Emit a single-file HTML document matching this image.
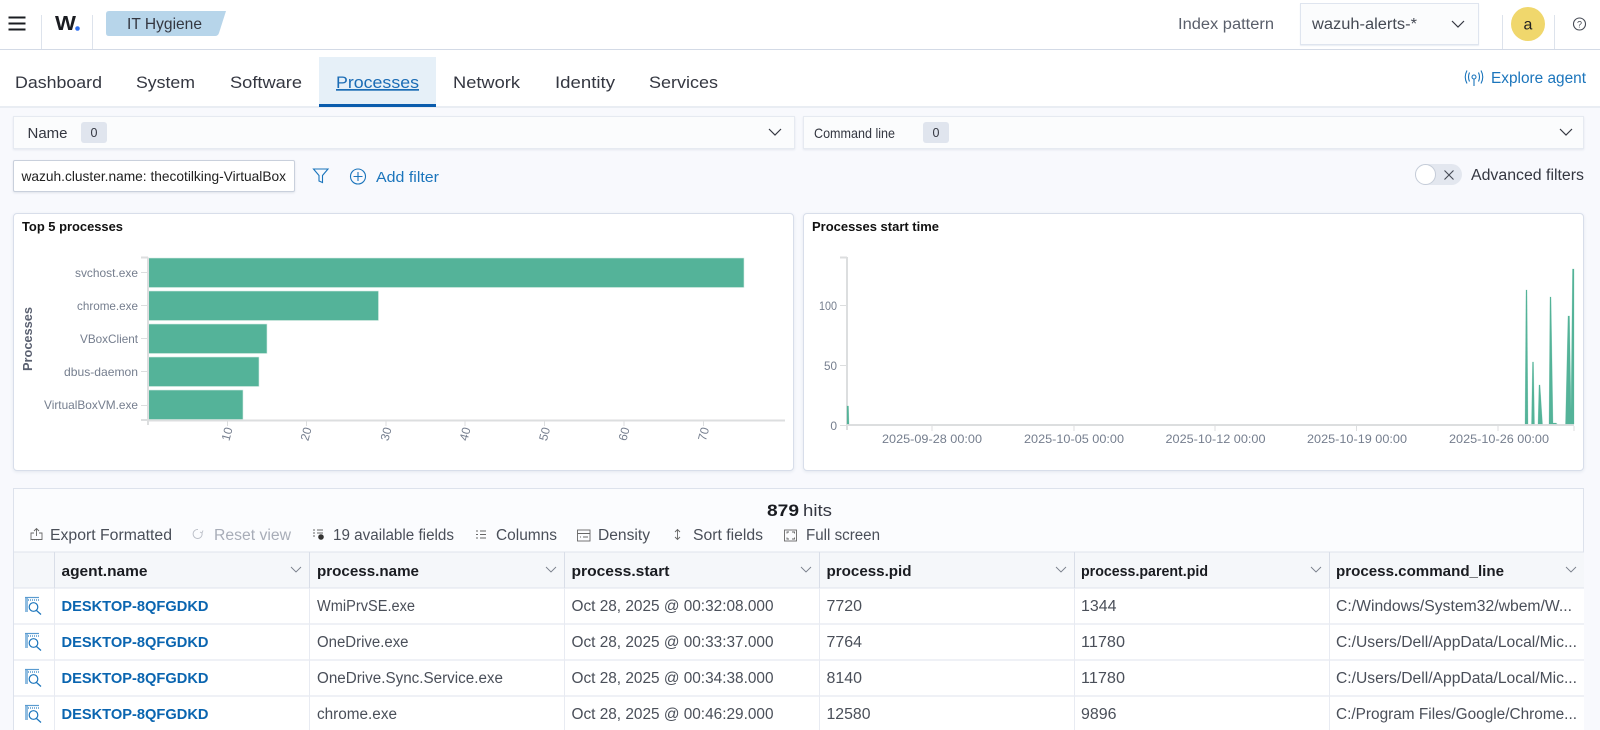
<!DOCTYPE html>
<html><head><meta charset="utf-8"><title>IT Hygiene</title>
<style>
html,body{margin:0;padding:0;width:1600px;height:730px;overflow:hidden;background:#f8f9fd;font-family:"Liberation Sans",sans-serif}
.b{position:absolute;box-sizing:border-box}
svg{position:absolute;left:0;top:0;filter:blur(.3px)}
text{font-family:"Liberation Sans",sans-serif;fill:#343741}
.t{font-size:17px;fill:#343741}
.h{font-size:15px;font-weight:bold;fill:#1a1c21}
.c{font-size:15.5px;fill:#4a4f59}
.l{font-size:15px;font-weight:bold;fill:#0a65b0}
.a{font-size:12px;fill:#757e8e}
.ti{font-size:12.5px;font-weight:bold;fill:#111}
</style></head><body>
<div class="b" style="left:0;top:0;width:1600px;height:50px;background:#fff;border-bottom:1px solid #d3dae6"></div>
<div class="b" style="left:0;top:50px;width:1600px;height:57px;background:#fff"></div>
<div class="b" style="left:0;top:106px;width:1600px;height:2px;background:#e9edf3"></div>
<div class="b" style="left:319px;top:57px;width:117px;height:50px;background:#e6f0f8;border-bottom:3px solid #0a5cad"></div>
<div class="b" style="left:1300px;top:3px;width:179px;height:42px;background:#fbfcfd;border:1px solid #dfe5ef;box-shadow:0 1px 1px #e8ecf3"></div>
<div class="b" style="left:13px;top:116px;width:782px;height:33px;background:#fbfcfd;border:1px solid #e6eaf1;box-shadow:0 1px 2px #e3e7ef"></div>
<div class="b" style="left:803px;top:116px;width:781px;height:33px;background:#fbfcfd;border:1px solid #e6eaf1;box-shadow:0 1px 2px #e3e7ef"></div>
<div class="b" style="left:81px;top:122px;width:26px;height:21px;background:#e0e5ee;border-radius:3px"></div>
<div class="b" style="left:923px;top:122px;width:26px;height:21px;background:#e0e5ee;border-radius:3px"></div>
<div class="b" style="left:13px;top:160px;width:282px;height:32px;background:#fff;border:1px solid #c9d0dc;border-radius:2px;box-shadow:0 1px 2px #dfe3ea"></div>
<div class="b" style="left:1415px;top:164px;width:47px;height:21px;background:#e3e7ef;border-radius:11px"></div>
<div class="b" style="left:1415px;top:164px;width:21px;height:21px;background:#fff;border:1px solid #c5ccd8;border-radius:50%"></div>
<div class="b" style="left:13px;top:213px;width:781px;height:258px;background:#fff;border:1px solid #d8deea;border-radius:4px;box-shadow:0 1px 3px #e3e7ef"></div>
<div class="b" style="left:803px;top:213px;width:781px;height:258px;background:#fff;border:1px solid #d8deea;border-radius:4px;box-shadow:0 1px 3px #e3e7ef"></div>
<div class="b" style="left:13px;top:488px;width:1571px;height:242px;background:#fbfcfe;border:1px solid #dde2ec;border-bottom:0"></div>
<div class="b" style="left:14px;top:552px;width:1570px;height:36px;background:#f5f7fa"></div>
<div class="b" style="left:14px;top:588px;width:1570px;height:142px;background:#fff"></div>

<svg width="1600" height="730" viewBox="0 0 1600 730">
<!-- header -->
<g stroke="#1a1c21" stroke-width="2"><path d="M8.500 17.500H25.500M8.500 23.500H25.500M8.500 29.500H25.500"/></g>
<path d="M41.500 15V49M92.500 15V49M1502.500 15V49M1554.500 15V49" stroke="#dde3ec"/>
<text x="55" y="30" font-size="20" font-weight="bold" textLength="21" lengthAdjust="spacingAndGlyphs" style="fill:#1a1c21">W</text>
<circle cx="77.500" cy="28.500" r="2.300" fill="#2f6fed"/>
<path d="M109 11H226L219 33Q218 36 215 36H109Q106 36 106 33V14Q106 11 109 11Z" fill="#b7d5ea"/>
<text x="127" y="29" font-size="16" textLength="75" lengthAdjust="spacingAndGlyphs" fill="#343741">IT Hygiene</text>
<text x="1178" y="29" font-size="15.500" textLength="96" lengthAdjust="spacingAndGlyphs" style="fill:#5a5f6b">Index pattern</text>
<text x="1312" y="29" font-size="15.500" textLength="105" lengthAdjust="spacingAndGlyphs" style="fill:#454a54">wazuh-alerts-*</text>
<path d="M1452 21l6 6 6-6" fill="none" stroke="#343741" stroke-width="1.200"/>
<circle cx="1528" cy="24" r="17" fill="#f0d76c"/>
<text x="1528" y="29.500" font-size="16" text-anchor="middle" style="fill:#222">a</text>
<circle cx="1579.500" cy="24" r="6" fill="none" stroke="#454a54" stroke-width="1.100"/>
<text x="1579.500" y="27.500" font-size="9" text-anchor="middle" style="fill:#454a54">?</text>
<!-- tabs -->
<text class="t" x="15" y="88" textLength="87" lengthAdjust="spacingAndGlyphs">Dashboard</text>
<text class="t" x="136" y="88" textLength="59" lengthAdjust="spacingAndGlyphs">System</text>
<text class="t" x="230" y="88" textLength="72" lengthAdjust="spacingAndGlyphs">Software</text>
<text x="336" y="88" font-size="17" textLength="83" lengthAdjust="spacingAndGlyphs" text-decoration="underline" style="fill:#1b6cb5">Processes</text>
<text class="t" x="453" y="88" textLength="67" lengthAdjust="spacingAndGlyphs">Network</text>
<text class="t" x="555" y="88" textLength="60" lengthAdjust="spacingAndGlyphs">Identity</text>
<text class="t" x="649" y="88" textLength="69" lengthAdjust="spacingAndGlyphs">Services</text>
<g fill="none" stroke="#1b75bc" stroke-width="1.100"><circle cx="1474" cy="77" r="2"/><path d="M1474 79V86M1469.500 72.500Q1467.500 77 1469.500 81.500M1478.500 72.500Q1480.500 77 1478.500 81.500M1467 70.500Q1463.500 77 1467 83.500M1481 70.500Q1484.500 77 1481 83.500"/></g>
<text x="1491" y="83" font-size="15.500" textLength="95" lengthAdjust="spacingAndGlyphs" style="fill:#1b75bc">Explore agent</text>
<!-- filters -->
<text x="27.500" y="138" font-size="15" textLength="40" lengthAdjust="spacingAndGlyphs">Name</text>
<text x="94" y="137" font-size="12.500" text-anchor="middle">0</text>
<text x="814" y="138" font-size="14" textLength="81" lengthAdjust="spacingAndGlyphs">Command line</text>
<text x="936" y="137" font-size="12.500" text-anchor="middle">0</text>
<path d="M769 129l6 6 6-6M1560 129l6 6 6-6" fill="none" stroke="#343741" stroke-width="1.200"/>
<text x="21.500" y="181" font-size="13.800" textLength="264.500" lengthAdjust="spacingAndGlyphs" style="fill:#222">wazuh.cluster.name: thecotilking-VirtualBox</text>
<path d="M313.500 169h14.500l-5.500 6.500v7l-3.500-1.500v-5.500z" fill="none" stroke="#1b75bc" stroke-width="1.100"/>
<circle cx="358" cy="176.500" r="7.500" fill="none" stroke="#1b75bc" stroke-width="1.100"/>
<path d="M358 172v9M353.500 176.500h9" stroke="#1b75bc" stroke-width="1.100"/>
<text x="376" y="182" font-size="15" textLength="63" lengthAdjust="spacingAndGlyphs" style="fill:#1b75bc">Add filter</text>
<path d="M1444.500 170.500l9 9M1453.500 170.500l-9 9" stroke="#454a54" stroke-width="1.100"/>
<text x="1471" y="180" font-size="15.500" textLength="113" lengthAdjust="spacingAndGlyphs">Advanced filters</text>
<!-- left chart -->
<text class="ti" x="22" y="231" textLength="101" lengthAdjust="spacingAndGlyphs">Top 5 processes</text>
<g fill="#54b399" stroke="#d7ebe5" stroke-width=".6">
<rect x="148" y="258" width="596" height="29.500"/><rect x="148" y="291" width="230.500" height="29.500"/><rect x="148" y="324" width="119" height="29.500"/><rect x="148" y="357" width="111" height="29.500"/><rect x="148" y="390" width="95" height="29.500"/>
</g>
<path d="M148 257.500V425M141 257.500h7M148 420.500H785M141 420H148" stroke="#dcdedf" stroke-width="2" fill="none"/>
<path d="M141 272.500h6M141 305.500h6M141 338.500h6M141 371.500h6M141 405.500h6M227.500 421v5M306.500 421v5M386 421v5M465 421v5M544.500 421v5M624 421v5M703.500 421v5" stroke="#dcdedf" fill="none"/>
<text class="a" x="138" y="277" text-anchor="end" textLength="63" lengthAdjust="spacingAndGlyphs">svchost.exe</text>
<text class="a" x="138" y="310" text-anchor="end" textLength="61" lengthAdjust="spacingAndGlyphs">chrome.exe</text>
<text class="a" x="138" y="343" text-anchor="end" textLength="58" lengthAdjust="spacingAndGlyphs">VBoxClient</text>
<text class="a" x="138" y="376" text-anchor="end" textLength="74" lengthAdjust="spacingAndGlyphs">dbus-daemon</text>
<text class="a" x="138" y="409" text-anchor="end" textLength="94" lengthAdjust="spacingAndGlyphs">VirtualBoxVM.exe</text>
<text x="32" y="339" font-size="12.500" font-weight="bold" text-anchor="middle" transform="rotate(-90 32 339)" textLength="64" lengthAdjust="spacingAndGlyphs" style="fill:#5a6070">Processes</text>
<text class="a" text-anchor="middle" transform="translate(231 435) rotate(-75)">10</text>
<text class="a" text-anchor="middle" transform="translate(310 435) rotate(-75)">20</text>
<text class="a" text-anchor="middle" transform="translate(390 435) rotate(-75)">30</text>
<text class="a" text-anchor="middle" transform="translate(469 435) rotate(-75)">40</text>
<text class="a" text-anchor="middle" transform="translate(548.500 435) rotate(-75)">50</text>
<text class="a" text-anchor="middle" transform="translate(628 435) rotate(-75)">60</text>
<text class="a" text-anchor="middle" transform="translate(707.500 435) rotate(-75)">70</text>
<!-- right chart -->
<text class="ti" x="812" y="231" textLength="127" lengthAdjust="spacingAndGlyphs">Processes start time</text>
<path d="M847 257V430M840 257.500h7M847 425H1574" stroke="#dcdedf" stroke-width="2" fill="none"/>
<path d="M840 305.500h6M840 365.500h6M840 425.500h6M932 426v5M1074 426v5M1215 426v5M1356.500 426v5M1498 426v5M1574 426v5" stroke="#dcdedf" fill="none"/>
<text class="a" x="837" y="310" text-anchor="end" textLength="18" lengthAdjust="spacingAndGlyphs">100</text>
<text class="a" x="837" y="370" text-anchor="end" textLength="13" lengthAdjust="spacingAndGlyphs">50</text>
<text class="a" x="837" y="430" text-anchor="end">0</text>
<text class="a" x="932" y="443" text-anchor="middle" textLength="100" lengthAdjust="spacingAndGlyphs">2025-09-28 00:00</text>
<text class="a" x="1074" y="443" text-anchor="middle" textLength="100" lengthAdjust="spacingAndGlyphs">2025-10-05 00:00</text>
<text class="a" x="1215.500" y="443" text-anchor="middle" textLength="100" lengthAdjust="spacingAndGlyphs">2025-10-12 00:00</text>
<text class="a" x="1357" y="443" text-anchor="middle" textLength="100" lengthAdjust="spacingAndGlyphs">2025-10-19 00:00</text>
<text class="a" x="1499" y="443" text-anchor="middle" textLength="100" lengthAdjust="spacingAndGlyphs">2025-10-26 00:00</text>
<g fill="#54b399" stroke="#54b399" stroke-opacity=".4" stroke-width=".6">
<path d="M847 424V406H848.500L849 424Z"/>
<path d="M1525 424L1526 290H1527L1528 424Z"/>
<path d="M1531.500 424L1532.500 362H1533.500L1534.500 424Z"/>
<path d="M1538 424L1539 385H1540L1542.500 424Z"/>
<path d="M1549 424L1550 297H1551L1553 423H1556L1557 424Z"/>
<path d="M1565.500 424L1568 316H1569.500L1571 410L1572.500 269H1574V424Z"/>
</g>
<!-- table toolbar -->
<text x="799" y="516" font-size="17" font-weight="bold" text-anchor="end" textLength="32" lengthAdjust="spacingAndGlyphs" style="fill:#1a1c21">879</text>
<text x="803" y="516" font-size="16.500" textLength="29" lengthAdjust="spacingAndGlyphs">hits</text>
<g fill="none" stroke="#666" stroke-width=".9">
<path d="M34 533h-3v6.500h11V533h-3M36.500 536v-7.500M34 531l2.500-2.500 2.500 2.500"/>
<path d="M203 530.500l-1 2.500-2-1M202 533a4.500 4.500 0 1 1-4-3.500" stroke="#b9bdc6"/>
<path d="M313 530h2M313 533h2M313 536h2M317 530h6M317 533h6"/>
<circle cx="321" cy="537" r="2.800" fill="#333" stroke="none"/>
<path d="M476 531h2M476 534.500h2M476 538h2M480 531h6M480 534.500h6M480 538h6"/>
<rect x="577.500" y="530" width="12.500" height="11"/><path d="M577.500 533.500h12.500M580 537h1M583 537h5"/>
<path d="M677.500 529.500v10M675 532l2.500-2.500L680 532M675 537l2.500 2.500L680 537"/>
<rect x="784.500" y="530" width="12" height="11"/><path d="M787 533.500v-1.500h2M792 532h2.500v1.500M794.500 537.500v1.500H792M789 539h-2v-1.500"/>
</g>
<text class="c" x="50" y="540" textLength="122" lengthAdjust="spacingAndGlyphs">Export Formatted</text>
<text x="214" y="540" font-size="15.500" textLength="77" lengthAdjust="spacingAndGlyphs" style="fill:#a8adb8">Reset view</text>
<text class="c" x="333" y="540" textLength="121" lengthAdjust="spacingAndGlyphs">19 available fields</text>
<text class="c" x="496" y="540" textLength="61" lengthAdjust="spacingAndGlyphs">Columns</text>
<text class="c" x="598" y="540" textLength="52" lengthAdjust="spacingAndGlyphs">Density</text>
<text class="c" x="693" y="540" textLength="70" lengthAdjust="spacingAndGlyphs">Sort fields</text>
<text class="c" x="806" y="540" textLength="74" lengthAdjust="spacingAndGlyphs">Full screen</text>
<!-- table grid -->
<path d="M14 552H1584M14 588H1584M14 624H1584M14 660H1584M14 696H1584" stroke="#dfe3ec" stroke-width="1"/>
<path d="M54.500 552V730M309.500 552V730M564.500 552V730M819.500 552V730M1074.500 552V730M1329.500 552V730" stroke="#e8ebf2"/>
<path d="M54.500 552V588M309.500 552V588M564.500 552V588M819.500 552V588M1074.500 552V588M1329.500 552V588" stroke="#d9dee8"/>
<path d="M291 567l5 5 5-5M546 567l5 5 5-5M801 567l5 5 5-5M1056 567l5 5 5-5M1311 567l5 5 5-5M1566 567l5 5 5-5" fill="none" stroke="#7a808c" stroke-width=".9"/>
<text class="h" x="61.500" y="576" textLength="86" lengthAdjust="spacingAndGlyphs">agent.name</text>
<text class="h" x="317" y="576" textLength="102" lengthAdjust="spacingAndGlyphs">process.name</text>
<text class="h" x="571.500" y="576" textLength="98" lengthAdjust="spacingAndGlyphs">process.start</text>
<text class="h" x="826.500" y="576" textLength="85" lengthAdjust="spacingAndGlyphs">process.pid</text>
<text x="1081" y="576" font-size="14.500" font-weight="bold" textLength="127" lengthAdjust="spacingAndGlyphs" style="fill:#1a1c21">process.parent.pid</text>
<text class="h" x="1336" y="576" textLength="168" lengthAdjust="spacingAndGlyphs">process.command_line</text>
<!-- rows -->
<defs><g id="ic" fill="none" stroke="#1b75bc" stroke-width="1.200"><rect x="25" y="0" width="3" height="15" fill="#8fbce0" stroke="none"/><path d="M25 0.500H39" stroke="#5a9bd0"/><path d="M28 3H39" stroke-dasharray="1 1" stroke-width="2" stroke="#7fb2da"/><circle cx="33.500" cy="10" r="4.300"/><path d="M36.500 13.500L41 17.500"/></g></defs>
<use href="#ic" x="0" y="597"/><use href="#ic" x="0" y="633"/><use href="#ic" x="0" y="669"/><use href="#ic" x="0" y="705"/>
<text class="l" x="61.500" y="611" textLength="147" lengthAdjust="spacingAndGlyphs">DESKTOP-8QFGDKD</text>
<text class="l" x="61.500" y="647" textLength="147" lengthAdjust="spacingAndGlyphs">DESKTOP-8QFGDKD</text>
<text class="l" x="61.500" y="683" textLength="147" lengthAdjust="spacingAndGlyphs">DESKTOP-8QFGDKD</text>
<text class="l" x="61.500" y="719" textLength="147" lengthAdjust="spacingAndGlyphs">DESKTOP-8QFGDKD</text>
<text class="c" x="317" y="611" textLength="98" lengthAdjust="spacingAndGlyphs">WmiPrvSE.exe</text>
<text class="c" x="317" y="647" textLength="91.500" lengthAdjust="spacingAndGlyphs">OneDrive.exe</text>
<text class="c" x="317" y="683" textLength="186" lengthAdjust="spacingAndGlyphs">OneDrive.Sync.Service.exe</text>
<text class="c" x="317" y="719" textLength="80" lengthAdjust="spacingAndGlyphs">chrome.exe</text>
<text class="c" x="571.500" y="611" textLength="202" lengthAdjust="spacingAndGlyphs">Oct 28, 2025 @ 00:32:08.000</text>
<text class="c" x="571.500" y="647" textLength="202" lengthAdjust="spacingAndGlyphs">Oct 28, 2025 @ 00:33:37.000</text>
<text class="c" x="571.500" y="683" textLength="202" lengthAdjust="spacingAndGlyphs">Oct 28, 2025 @ 00:34:38.000</text>
<text class="c" x="571.500" y="719" textLength="202" lengthAdjust="spacingAndGlyphs">Oct 28, 2025 @ 00:46:29.000</text>
<text class="c" x="826.500" y="611" textLength="35.500" lengthAdjust="spacingAndGlyphs">7720</text>
<text class="c" x="826.500" y="647" textLength="35.500" lengthAdjust="spacingAndGlyphs">7764</text>
<text class="c" x="826.500" y="683" textLength="35.500" lengthAdjust="spacingAndGlyphs">8140</text>
<text class="c" x="826.500" y="719" textLength="44" lengthAdjust="spacingAndGlyphs">12580</text>
<text class="c" x="1081" y="611" textLength="35.500" lengthAdjust="spacingAndGlyphs">1344</text>
<text class="c" x="1081" y="647" textLength="44" lengthAdjust="spacingAndGlyphs">11780</text>
<text class="c" x="1081" y="683" textLength="44" lengthAdjust="spacingAndGlyphs">11780</text>
<text class="c" x="1081" y="719" textLength="35.500" lengthAdjust="spacingAndGlyphs">9896</text>
<text class="c" x="1336" y="611" textLength="236" lengthAdjust="spacingAndGlyphs">C:/Windows/System32/wbem/W...</text>
<text class="c" x="1336" y="647" textLength="241" lengthAdjust="spacingAndGlyphs">C:/Users/Dell/AppData/Local/Mic...</text>
<text class="c" x="1336" y="683" textLength="241" lengthAdjust="spacingAndGlyphs">C:/Users/Dell/AppData/Local/Mic...</text>
<text class="c" x="1336" y="719" textLength="241" lengthAdjust="spacingAndGlyphs">C:/Program Files/Google/Chrome...</text>
</svg>
</body></html>
